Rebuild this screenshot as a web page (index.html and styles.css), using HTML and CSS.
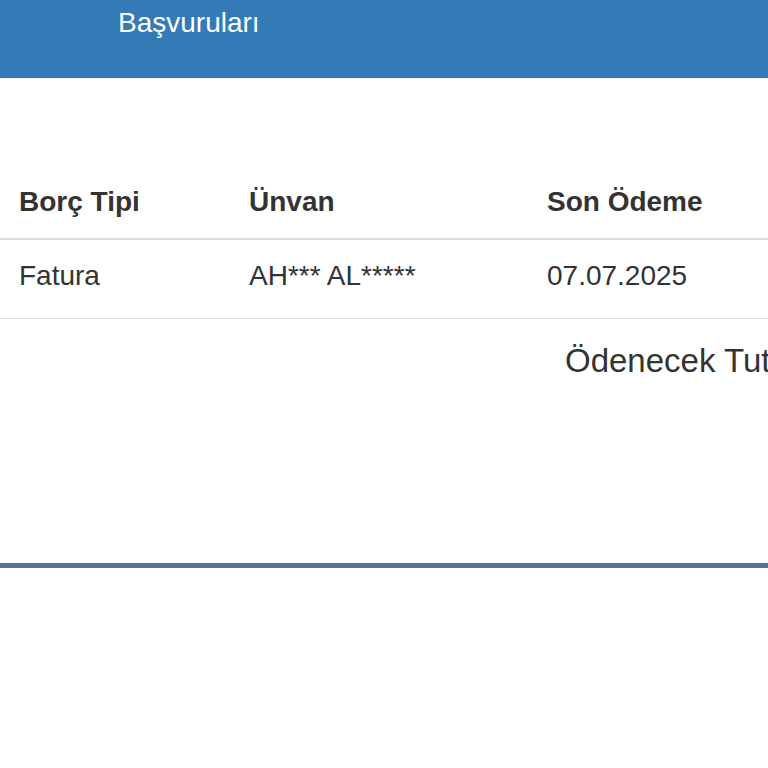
FILE: index.html
```html
<!DOCTYPE html>
<html lang="tr">
<head>
  <meta charset="UTF-8">
  <meta name="viewport" content="width=device-width, initial-scale=1.0">
  <title>Borç Sorgulama</title>
  <link rel="stylesheet" href="styles.css">
</head>
<body>
  <nav class="navbar">
    <ul class="nav-menu">
      <li><a href="#" class="nav-link">Başvuruları</a></li>
    </ul>
  </nav>

  <div class="panel">
    <table class="debt-table">
      <thead>
        <tr>
          <th class="col-type">Borç Tipi</th>
          <th class="col-name">Ünvan</th>
          <th class="col-date">Son Ödeme</th>
          <th class="col-amount">Tutar</th>
        </tr>
      </thead>
      <tbody>
        <tr>
          <td>Fatura</td>
          <td>AH*** AL*****</td>
          <td>07.07.2025</td>
          <td>245,90 TL</td>
        </tr>
      </tbody>
    </table>

    <div class="summary">
      <h4 class="total">Ödenecek Tutar: 245,90 TL</h4>
    </div>
  </div>
</body>
</html>
```

FILE: styles.css
```css
html, body {
  overflow: hidden;
}

body {
  margin: 0;
  font-family: "Liberation Sans", Arial, sans-serif;
  font-size: 28px;
  color: #333;
  background: #fff;
}

.navbar {
  height: 77px;
  background-color: #337ab7;
  border-bottom: 1px solid #2e6da4;
}

.nav-menu {
  list-style: none;
  margin: 0;
  padding: 3px 0 0 118px;
  display: flex;
}

.nav-link {
  color: #fff;
  text-decoration: none;
  font-size: 28px;
  line-height: 40px;
  white-space: nowrap;
}

.panel {
  width: 1200px;
  padding-top: 88px;
  border-bottom: 5px solid #58709f;
  height: 397px; /* puts the bottom rule at 563px */
}

.debt-table {
  border-collapse: collapse;
  width: 100%;
}

.debt-table th,
.debt-table td {
  padding: 16px;
  line-height: 40px;
  text-align: left;
  vertical-align: top;
  white-space: nowrap;
}

.debt-table th:first-child,
.debt-table td:first-child {
  padding-left: 19px;
}

.debt-table th {
  font-weight: bold;
  vertical-align: bottom;
  border-bottom: 2px solid #ddd;
}

.debt-table tbody tr {
  height: 79px;
}

.debt-table td {
  border-bottom: 1px solid #ddd;
}

.col-type { width: 198px; }
.col-name { width: 266px; }
.col-date { width: 268px; }

.summary {
  padding-left: 565px;
  margin-top: 24px;
}

.total {
  margin: 0;
  font-size: 33px;
  font-weight: normal;
  line-height: 1.1;
  white-space: nowrap;
}
```
